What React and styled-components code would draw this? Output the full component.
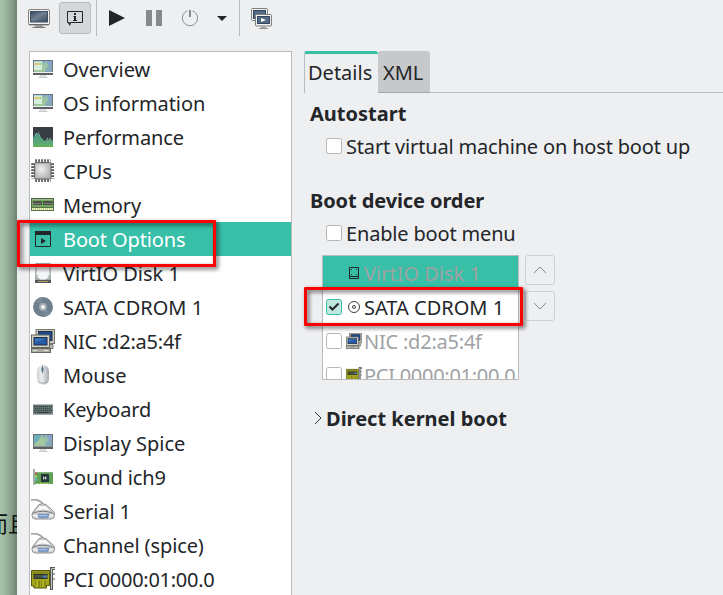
import React from "react";
import styled, { createGlobalStyle } from "styled-components";

const Global = createGlobalStyle`
  * { box-sizing: border-box; }
  html, body { margin: 0; padding: 0; overflow: hidden; }
  body { font-family: "Noto Sans", "Noto Sans CJK SC", sans-serif; font-size: 20px; color: #232629; }
  svg { display: block; flex: none; }
`;

const Screen = styled.div`
  position: relative;
  display: flex;
  width: 723px;
  height: 595px;
  overflow: hidden;
  background: #eeeff1;
`;
const Desktop = styled.div`
  width: 17px;
  flex: none;
  overflow: hidden;
  padding-top: 506px;
  background: linear-gradient(90deg, #a6c3aa 0, #9cb8a0 5px, #849c88 12px, #6f8472 17px);
`;
const DesktopText = styled.div`
  margin-left: -14px;
  width: 60px;
  line-height: 32px;
  font-size: 22px;
  font-family: "Noto Sans CJK SC", sans-serif;
  color: #0c120d;
  white-space: nowrap;
`;
const Window = styled.div`
  flex: 1;
  min-width: 0;
  display: flex;
  flex-direction: column;
`;
const Toolbar = styled.div`
  display: flex;
  height: 51px;
  flex: none;
  padding-left: 10px;
`;
const Tool = styled.div`
  width: ${(p) => p.$w}px;
  height: 36px;
  display: flex;
  align-items: center;
  justify-content: center;
`;
const PressedTool = styled(Tool)`
  height: 32px;
  margin: 2px 5px 0 8px;
  background: #d6d7d9;
  border: 1px solid #b9bbbd;
  border-radius: 3px;
`;
const Separator = styled.div`
  width: 1px;
  height: 36px;
  background: #b9bbbe;
`;
const Body = styled.div`
  display: flex;
  flex: 1;
  min-height: 0;
`;
const DeviceList = styled.div`
  width: 263px;
  height: 560px;
  margin-left: 12px;
  flex: none;
  background: #fff;
  border: 1px solid #b9bbbe;
`;
const DeviceRow = styled.div`
  display: flex;
  align-items: center;
  height: 34px;
  padding-left: 1px;
  gap: 8px;
  white-space: nowrap;
  line-height: 34px;
  background: ${(p) => (p.$active ? "#37bfa7" : "transparent")};
  color: ${(p) => (p.$active ? "#fff" : "#232629")};
`;
const Label = styled.span`
  padding-top: 2px;
  line-height: 32px;
  letter-spacing: ${(p) => p.$track || 0}px;
`;
const Details = styled.div`
  flex: 1;
  min-width: 0;
  display: flex;
  flex-direction: column;
  padding-left: 12px;
`;
const Tabs = styled.div`
  display: flex;
  height: 42px;
`;
const Tab = styled.div`
  width: ${(p) => p.$w}px;
  height: 42px;
  white-space: nowrap;
  padding-left: ${(p) => (p.$active ? 3 : 5)}px;
  border-radius: 3px 3px 0 0;
  background: ${(p) => (p.$active ? "#eeeff1" : "#c7c8ca")};
  border-top: ${(p) => (p.$active ? "3px solid #37bfa7" : "0")};
  border-left: ${(p) => (p.$active ? "1px solid #b9bbbe" : "0")};
  border-bottom: ${(p) => (p.$active ? "0" : "1px solid #a5a6a8")};
  line-height: ${(p) => (p.$active ? 38 : 44)}px;
`;
const TabRule = styled.div`
  flex: 1;
  border-bottom: 1px solid #b9bbbe;
`;
const Heading = styled.div`
  height: 28px;
  line-height: 28px;
  margin: ${(p) => p.$top}px 0 0 6px;
  font-weight: 700;
  letter-spacing: ${(p) => p.$track || 0}px;
  white-space: nowrap;
`;
const CheckRow = styled.div`
  display: flex;
  align-items: center;
  height: 34px;
  margin-top: 1px;
  padding-left: 22px;
  gap: 4px;
  letter-spacing: -0.17px;
  white-space: nowrap;
`;
const Box = styled.span`
  width: 16px;
  height: 16px;
  flex: none;
  border-radius: 2.5px;
  border: 1px solid ${(p) => (p.$on ? "#37bfa7" : "#b4b6b8")};
  background: ${(p) => (p.$on ? "#bfe6df" : "#fff")};
  visibility: ${(p) => (p.$hidden ? "hidden" : "visible")};
`;
const OrderArea = styled.div`
  display: flex;
  gap: 6px;
  margin: 5px 0 0 18px;
`;
const OrderList = styled.div`
  width: 197px;
  height: 125px;
  overflow: hidden;
  border: 1px solid #b9bbbe;
  background: #fff;
`;
const OrderRow = styled.div`
  display: flex;
  align-items: center;
  height: 34px;
  padding-left: 3px;
  white-space: nowrap;
  background: ${(p) => (p.$selected ? "#37bfa7" : "#fff")};
  color: ${(p) => (p.$on ? "#232629" : "#a0a2a4")};
`;
const OrderIcon = styled.span`
  margin: 0 2px 0 4px;
`;
const ArrowStack = styled.div`
  display: flex;
  flex-direction: column;
  gap: 6px;
`;
const ArrowButton = styled.div`
  width: 30px;
  height: 30px;
  display: flex;
  align-items: center;
  justify-content: center;
  border: 1px solid #cfd0d2;
  border-radius: 3px;
`;
const Expander = styled.div`
  display: flex;
  align-items: center;
  gap: 4px;
  height: 28px;
  margin: 24px 0 0 9px;
  font-weight: 700;
  white-space: nowrap;
`;
const Highlight = styled.div`
  position: absolute;
  left: ${(p) => p.$x}px;
  top: ${(p) => p.$y}px;
  width: ${(p) => p.$w}px;
  height: ${(p) => p.$h}px;
  border: 3px solid #fe0000;
  border-radius: 1px;
  filter: drop-shadow(2px 2px 2px rgba(0, 0, 0, 0.65));
`;

function Icon({ size = 24, box = 24, children }) {
  return (
    <svg width={size} height={size} viewBox={`0 0 ${box} ${box}`}>
      {children}
    </svg>
  );
}

const Monitor = ({ windowed }) => (
  <Icon>
    <rect x="2" y="3" width="20" height="15" fill="#6b7274" />
    <rect x="3" y="4" width="18" height="12" fill="#86b3b4" />
    <path d="M3 4h8l-4 6-4 3z" fill="#6fadc0" />
    <path d="M11 4h10v5l-7 3z" fill="#86a3d0" />
    <path d="M7 10l4-6 4 8-3 4H3v-3z" fill="#a3c79c" />
    <path d="M14 9l7-1v8h-5z" fill="#86a9ba" />
    <path d="M15 4l3 5-4 3-2-4z" fill="#98c3a4" />
    {windowed && (
      <g>
        <rect x="3" y="4.500" width="8" height="8.500" fill="#d5ecdf" />
        <rect x="3" y="4" width="8" height="1" fill="#a9d8ea" />
        <rect x="4" y="6" width="1.500" height="2" fill="#e9ac45" />
        <rect x="6.200" y="6" width="1.800" height="2" fill="#ecc94b" />
        <rect x="8.500" y="6" width="1.500" height="2" fill="#7fce6a" />
      </g>
    )}
    <rect x="2" y="15" width="20" height="1" fill={windowed ? "#eef1f1" : "#8a9597"} />
    <rect x="2" y="16" width="20" height="2" fill="#5c6062" />
    <path d="M9 18h6l.7 2H8.300z" fill="#dcdddf" />
    <path d="M7.500 20.500h9" stroke="#c9cbcc" />
  </Icon>
);

const Performance = () => (
  <Icon>
    <defs>
      <linearGradient id="hills" x1="0" y1="0" x2="0" y2="1">
        <stop offset="0" stopColor="#4a9690" />
        <stop offset="1" stopColor="#62b266" />
      </linearGradient>
    </defs>
    <rect x="2" y="2" width="20" height="20" fill="#383f44" />
    <path d="M2 13l2.500-4 1.500-.8L7.500 9l1.500 2 3 3.500 2 1.500 3-1.500h2l3 1.500V22H2z" fill="url(#hills)" />
    <path d="M5 8.500h1M7 8h1M4 10h1M8 10h1M16 13.500h1M18.500 13.500h1M15 15h1M19.500 15h1" stroke="#a7d2c6" />
    <path d="M2 21.500h20" stroke="#63b04d" />
  </Icon>
);

const Cpu = () => (
  <Icon>
    <defs>
      <radialGradient id="die" cx=".4" cy=".4" r=".7">
        <stop offset="0" stopColor="#f0f0ef" />
        <stop offset="1" stopColor="#b4b5b4" />
      </radialGradient>
    </defs>
    <path d="M4.200 1.900h15.500M4.200 21.300h15.500" stroke="#565757" strokeWidth="3.400" strokeDasharray="1.700 1.300" />
    <path d="M1.900 4.200v15.500M21.300 4.200v15.500" stroke="#565757" strokeWidth="3.400" strokeDasharray="1.700 1.300" />
    <rect x="3.500" y="3.500" width="16.500" height="16.500" rx="1.500" fill="#a9aaa9" stroke="#6c6d6c" />
    <rect x="4.700" y="4.700" width="14" height="14" rx="1" fill="url(#die)" />
  </Icon>
);

const Memory = () => (
  <Icon>
    <rect x="0.500" y="5.500" width="22" height="9" fill="#79a263" stroke="#4c6c40" />
    <rect x="2" y="8" width="9" height="4" fill="#4b5149" />
    <rect x="12" y="8" width="9.500" height="4" fill="#4b5149" />
    <path d="M1 6.500h21" stroke="#9db78f" />
    <path d="M11.500 7v6" stroke="#55c04a" />
    <path d="M2 10.500h8M13 10.500h8" stroke="#777d73" />
    <rect x="0.500" y="14.500" width="22" height="3" fill="#eff1c2" stroke="#557449" />
    <path d="M2 16h20" stroke="#c5cd8a" strokeWidth="2" strokeDasharray="1 1" />
  </Icon>
);

const BootIcon = () => (
  <Icon>
    <path d="M4.500 4.500h15v15h-15z" fill="none" stroke="#232629" />
    <path d="M4 4h16v4H4z" fill="#232629" />
    <path d="M10 11v6l5-3z" fill="#232629" />
  </Icon>
);

const Disk = () => (
  <Icon>
    <path d="M4.500 2h15l.5 17v1H4v-1z" fill="#a3aaab" />
    <path d="M5.500 4q0-1 1-1h11q1 0 1 1v12q-3 1-4 2.500h-5q-1-1.500-4-2.500z" fill="#f5f6f7" />
    <path d="M5.500 5h1M17.500 5h1M5.500 15h1M17.500 15h1" stroke="#535959" />
    <rect x="4" y="19" width="16" height="3" fill="#55585a" />
    <path d="M7 20.500h10" stroke="#b39a62" />
  </Icon>
);

const Disc = () => (
  <Icon>
    <circle cx="12" cy="12" r="10" fill="#708090" />
    <path d="M12 12L4 6a10 10 0 0 1 7-4zM12 12l8 6a10 10 0 0 1-7 4z" fill="#7c8a97" />
    <circle cx="12" cy="12" r="4" fill="#a3abb2" />
    <circle cx="12" cy="12" r="2" fill="#f5f5f5" />
  </Icon>
);

const Nic = ({ size }) => (
  <Icon size={size}>
    <rect x="5" y="0.500" width="18.500" height="14" fill="#c9c8bf" stroke="#77766f" />
    <rect x="7.500" y="2.500" width="13.500" height="9" fill="#1d4a8f" stroke="#25303e" />
    <path d="M9 15.500h13v4H9z" fill="#bab9b0" stroke="#77766f" />
    <rect x="0.500" y="6" width="18" height="12.500" fill="#d4d3ca" stroke="#65645e" />
    <rect x="3" y="8.500" width="13" height="7.500" fill="#2459a6" stroke="#222d40" />
    <path d="M4 9.500h11l-11 4z" fill="#4074b9" />
    <rect x="0.500" y="19.500" width="19" height="4" fill="#aaa99f" stroke="#66655f" />
    <path d="M2 21.500h4M13 21.500h4" stroke="#e4e3da" />
  </Icon>
);

const Mouse = () => (
  <Icon>
    <defs>
      <linearGradient id="mouseBody" x1="0" x2="1">
        <stop offset="0" stopColor="#cdd0d4" />
        <stop offset="0.4" stopColor="#eeeff1" />
        <stop offset="1" stopColor="#a4a9af" />
      </linearGradient>
    </defs>
    <rect x="6" y="2" width="12" height="20" rx="6" fill="url(#mouseBody)" />
    <path d="M11.500 2v9" stroke="#a1a8ae" />
    <rect x="10.500" y="4" width="2" height="5" rx="1" fill="#4c7281" />
    <path d="M8 19q4 3 8 0" stroke="#9fa4ab" fill="none" />
  </Icon>
);

const Keyboard = () => (
  <Icon>
    <rect x="2" y="7" width="20" height="11" fill="#7b888a" />
    <path d="M2 7.500h20" stroke="#b3bcbe" />
    <path d="M3 9.500h18M3 13.500h18" stroke="#30403d" strokeWidth="1.500" strokeDasharray="1.500 .6" />
    <path d="M3.500 11.500h17M3.500 15.500h17" stroke="#30463f" strokeWidth="1.500" strokeDasharray="1.500 .6" />
    <path d="M7 15.500h9" stroke="#30403d" />
    <path d="M2 17.500h20" stroke="#a5adae" />
  </Icon>
);

const Sound = () => (
  <Icon>
    <rect x="4" y="7" width="18" height="12" fill="#5f9f57" />
    <path d="M4 7.500h18" stroke="#82b577" />
    <rect x="2" y="4" width="2" height="16" fill="#9eaeb1" />
    <path d="M4 8.500h2" stroke="#d95656" strokeWidth="2" />
    <path d="M4 11.500h2" stroke="#9de05e" strokeWidth="2" />
    <path d="M4 14.500h2" stroke="#5cc1d3" strokeWidth="2" />
    <rect x="10" y="9" width="8" height="8" rx=".5" fill="#293638" />
    <path d="M12 13h4M14.500 11.500v3M12.500 11.500v3" stroke="#d2dadb" strokeWidth=".9" />
    <path d="M6 18.500h13" stroke="#abc55a" strokeDasharray="2 1" />
  </Icon>
);

const Serial = () => (
  <Icon>
    <path d="M0 .9Q8-.2 12 5" stroke="#a2a4a4" strokeWidth="1.800" fill="none" />
    <path d="M8 5.500q3.500-1.500 7 0l7.500 7q1.500 1.500 1 4-.3 3.200-3 3.500H4q-2.700-.3-3-3.500 0-2.500 1-3.500z" fill="#d6d7d7" stroke="#8d8f8f" />
    <path d="M8.500 6.500L3.500 12.500q8-3 17 0L14.500 6.500z" fill="#f8f8f8" stroke="#b3b5b5" strokeWidth=".7" />
    <path d="M1.500 14.500q10-4.500 21 0" stroke="#76787a" fill="none" />
    <path d="M2 16h20v1.500H2z" fill="#f2f2f2" />
    <path d="M7 15h11l-1 3.800H8z" fill="#7d9fcd" stroke="#6d89ac" strokeWidth=".7" />
    <path d="M8.500 16.500h8" stroke="#d6e3f2" strokeDasharray="1 1" />
  </Icon>
);

const Pci = ({ size }) => (
  <Icon size={size}>
    <path d="M.5 3.500h18v15h-3v2.500H3v-2H.500z" fill="#a4a61b" stroke="#55570b" />
    <path d="M1.500 4.500h16v3h-16z" fill="#85881a" />
    <rect x="3" y="7.500" width="13" height="4" fill="#475247" stroke="#303229" />
    <path d="M12 9.500h4" stroke="#4a7fbd" strokeWidth="2" />
    <path d="M5 14v5M8 14v6M11 14v6M14 14v6" stroke="#65680b" />
    <path d="M6 14v6M12 14v6" stroke="#d2d440" />
    <path d="M24 1.500h-3.500V23" stroke="#545753" strokeWidth="3" fill="none" />
    <path d="M24 1.500h-3.500V22" stroke="#c5c7c4" fill="none" />
    <path d="M22 7h2M22 12h2" stroke="#545753" fill="none" />
  </Icon>
);

const MiniDisk = () => (
  <Icon size={16} box={16}>
    <path d="M3.500 2.500h9v11h-9zM4 11.500h8" fill="none" stroke="#232629" />
    <path d="M5 4.500h1M10 4.500h1M5 9.500h1M10 9.500h1" stroke="#232629" />
  </Icon>
);
const MiniDisc = () => (
  <Icon size={16} box={16}>
    <circle cx="8" cy="8" r="5.500" fill="none" stroke="#3c3f42" />
    <circle cx="8" cy="8" r="1.500" fill="none" stroke="#3c3f42" />
  </Icon>
);

const Console = () => (
  <Icon>
    <defs>
      <linearGradient id="glass" x1="0" y1="0" x2="1" y2="1">
        <stop offset="0" stopColor="#344760" />
        <stop offset=".45" stopColor="#718091" />
        <stop offset="1" stopColor="#34475d" />
      </linearGradient>
    </defs>
    <rect x="1.500" y="3.500" width="21" height="15.500" rx="1.500" fill="#f1f1ef" stroke="#858684" />
    <rect x="3.500" y="5.500" width="17" height="10.500" fill="url(#glass)" stroke="#405064" />
    <path d="M2 18.500h20" stroke="#6c6d6b" />
    <path d="M8 19h8v2H8z" fill="#989997" />
    <path d="M5.500 21.500h13" stroke="#777876" />
  </Icon>
);
const Info = () => (
  <Icon>
    <path d="M4.500 5.500h15v11h-12l-1 2.500v-2.500h-2z" fill="none" stroke="#232629" />
    <path d="M5 17h2.500L7 20z" fill="#232629" />
    <path d="M11 7h2v2h-2zM10.500 10H13v4h1v1h-4v-1h1v-3h-.5z" fill="#232629" />
  </Icon>
);
const Screens = () => (
  <Icon>
    <rect x="1.500" y="2.500" width="16" height="12" rx="1" fill="#f2f2f0" stroke="#7e7f7d" />
    <rect x="3.500" y="4.500" width="12" height="8" fill="#536a82" stroke="#34465d" />
    <rect x="5.500" y="8.500" width="16" height="11.500" rx="1" fill="#f2f2f0" stroke="#7e7f7d" />
    <rect x="7.500" y="10.500" width="12" height="7" fill="#536a82" stroke="#34465d" />
    <path d="M11 12v4l5-2z" fill="#fff" />
    <path d="M11 20.500h5v1.500h-5z" fill="#a6a7a5" />
    <path d="M9 22.500h9" stroke="#8c8d8b" />
  </Icon>
);

const devices = [
  { name: "Overview", icon: <Monitor windowed /> },
  { name: "OS information", icon: <Monitor windowed />, track: -0.08 },
  { name: "Performance", icon: <Performance />, track: -0.09 },
  { name: "CPUs", icon: <Cpu /> },
  { name: "Memory", icon: <Memory />, track: -0.1 },
  { name: "Boot Options", icon: <BootIcon />, active: true, track: -0.12 },
  { name: "VirtIO Disk 1", icon: <Disk /> },
  { name: "SATA CDROM 1", icon: <Disc /> },
  { name: "NIC :d2:a5:4f", icon: <Nic />, track: -0.22 },
  { name: "Mouse", icon: <Mouse /> },
  { name: "Keyboard", icon: <Keyboard />, track: -0.12 },
  { name: "Display Spice", icon: <Monitor />, track: -0.04 },
  { name: "Sound ich9", icon: <Sound />, track: -0.1 },
  { name: "Serial 1", icon: <Serial />, track: -0.1 },
  { name: "Channel (spice)", icon: <Serial />, track: -0.12 },
  { name: "PCI 0000:01:00.0", icon: <Pci />, track: -0.27 },
];

const bootOrder = [
  { name: "VirtIO Disk 1", icon: <MiniDisk />, selected: true },
  { name: "SATA CDROM 1", icon: <MiniDisc />, on: true },
  { name: "NIC :d2:a5:4f", icon: <Nic size={16} />, track: -0.22 },
  { name: "PCI 0000:01:00.0", icon: <Pci size={16} />, track: -0.27 },
];

function Check({ on, hidden }) {
  return (
    <Box $on={on} $hidden={hidden}>
      {on && (
        <svg width="14" height="14" viewBox="0 0 14 14">
          <path d="M2.500 6.500l3 3 6-6" fill="none" stroke="#232629" strokeWidth="2" />
        </svg>
      )}
    </Box>
  );
}

function MainToolbar() {
  return (
    <Toolbar>
      <Tool $w={24}><Console /></Tool>
      <PressedTool $w={32}><Info /></PressedTool>
      <Separator />
      <Tool $w={40}>
        <svg width="16" height="16"><path d="M0 0v16l16-8z" fill="#232629" /></svg>
      </Tool>
      <Tool $w={34}>
        <svg width="16" height="16"><path d="M0 0h6v16H0zM10 0h6v16h-6z" fill="#87898b" /></svg>
      </Tool>
      <Tool $w={38}>
        <svg width="18" height="18" viewBox="0 0 18 18">
          <path d="M6.500 1.900a7.600 7.600 0 1 0 5 0" fill="none" stroke="#87898b" />
          <path d="M9 1v7" stroke="#87898b" strokeWidth="2" />
        </svg>
      </Tool>
      <Tool $w={26}>
        <svg width="10" height="6"><path d="M0 1h10l-5 5z" fill="#232629" /></svg>
      </Tool>
      <Tool $w={4} />
      <Separator />
      <Tool $w={44}><Screens /></Tool>
    </Toolbar>
  );
}

export default function App() {
  return (
    <Screen>
      <Global />
      <Desktop><DesktopText>而且</DesktopText></Desktop>
      <Window>
        <MainToolbar />
        <Body>
          <DeviceList>
            {devices.map((d) => (
              <DeviceRow key={d.name} $active={d.active}>
                {d.icon}
                <Label $track={d.track}>{d.name}</Label>
              </DeviceRow>
            ))}
          </DeviceList>
          <Details>
            <Tabs>
              <Tab $active $w={74}>Details</Tab>
              <Tab $w={52}>XML</Tab>
              <TabRule />
            </Tabs>
            <Heading $top={7}>Autostart</Heading>
            <CheckRow><Check />Start virtual machine on host boot up</CheckRow>
            <Heading $top={24} $track={-0.1}>Boot device order</Heading>
            <CheckRow><Check />Enable boot menu</CheckRow>
            <OrderArea>
              <OrderList>
                {bootOrder.map((d) => (
                  <OrderRow key={d.name} $selected={d.selected} $on={d.on}>
                    <Check on={d.on} hidden={d.selected} />
                    <OrderIcon>{d.icon}</OrderIcon>
                    <Label $track={d.track}>{d.name}</Label>
                  </OrderRow>
                ))}
              </OrderList>
              <ArrowStack>
                <ArrowButton>
                  <svg width="14" height="8"><path d="M1 7l6-6 6 6" fill="none" stroke="#87898b" /></svg>
                </ArrowButton>
                <ArrowButton>
                  <svg width="14" height="8"><path d="M1 1l6 6 6-6" fill="none" stroke="#87898b" /></svg>
                </ArrowButton>
              </ArrowStack>
            </OrderArea>
            <Expander>
              <svg width="9" height="14"><path d="M2 1l6 6-6 6" fill="none" stroke="#34373a" /></svg>
              Direct kernel boot
            </Expander>
          </Details>
        </Body>
      </Window>
      <Highlight $x={17} $y={220} $w={199} $h={47} />
      <Highlight $x={304} $y={287} $w={219} $h={39} />
    </Screen>
  );
}
